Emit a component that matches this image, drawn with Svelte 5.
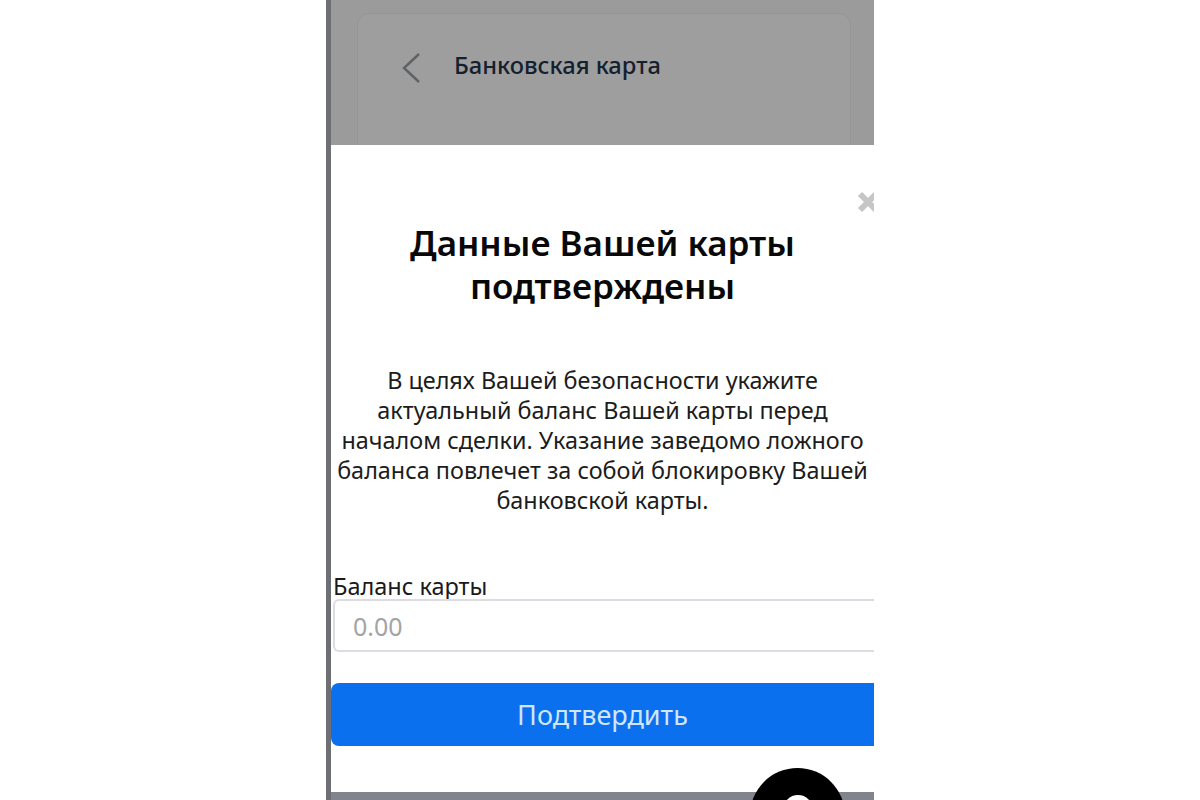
<script>
  let balance = $state('');
</script>

<div class="stage">
  <div class="phone">
    <div class="backdrop">
      <div class="card">
        <svg class="back" width="20" height="32" viewBox="0 0 20 32" fill="none" stroke="#5d6266" stroke-width="2.4">
          <path d="M18 2 L3 16 L18 30" />
        </svg>
        <span class="card-title">Банковская карта</span>
      </div>
    </div>

    <div class="modal">
      <svg class="close" width="22" height="22" viewBox="0 0 22 22" stroke="#c6c6c6" stroke-width="6">
        <path d="M3 3 L19 19 M19 3 L3 19" />
      </svg>
      <h2>Данные Вашей карты<br />подтверждены</h2>
      <p>
        В целях Вашей безопасности укажите<br />
        актуальный баланс Вашей карты перед<br />
        началом сделки. Указание заведомо ложного<br />
        баланса повлечет за собой блокировку Вашей<br />
        банковской карты.
      </p>
      <label for="balance">Баланс карты</label>
      <input id="balance" type="text" placeholder="0.00" bind:value={balance} />
      <button type="button">Подтвердить</button>
    </div>

    <div class="strip"></div>
    <div class="chat"><span class="chat-dot"></span></div>
  </div>
</div>

<style>
  :global(body) {
    background: #fff;
  }

  .stage {
    display: flex;
    justify-content: center;
    height: 800px;
    overflow: hidden;
    font-family: "Noto Sans", "Open Sans", sans-serif;
  }

  .phone {
    position: relative;
    width: 548px;
    height: 800px;
    background: #9b9b9b;
    border-left: 5px solid #6e6f75;
    box-sizing: border-box;
    overflow: hidden;
  }

  .backdrop {
    height: 145px;
    padding: 13px 23px 0 26px;
    box-sizing: border-box;
  }

  .card {
    display: flex;
    align-items: flex-start;
    height: 132px;
    padding: 38px 0 0 43px;
    background: #9e9e9e;
    border: 1px solid #959595;
    border-bottom: none;
    border-radius: 12px 12px 0 0;
    box-sizing: border-box;
  }

  .back {
    flex: none;
    margin-right: 33px;
  }

  .card-title {
    font-size: 23.7px;
    font-weight: 500;
    line-height: 26px;
    color: #15202e;
  }

  .modal {
    position: relative;
    display: flex;
    flex-direction: column;
    height: 647px;
    padding-top: 76px;
    background: #fff;
    box-sizing: border-box;
    color: #111;
  }

  .close {
    position: absolute;
    top: 46px;
    right: -5px;
  }

  h2 {
    margin: 0;
    font-size: 35px;
    font-weight: 600;
    line-height: 43px;
    text-align: center;
    color: #080808;
  }

  p {
    margin: 58px 0 0;
    font-size: 23.4px;
    line-height: 30px;
    text-align: center;
    color: #1c1c1c;
    white-space: nowrap;
  }

  label {
    margin: 58px 0 0 2px;
    font-size: 23.5px;
    line-height: 26px;
    color: #1a1a1a;
  }

  input {
    height: 53px;
    margin: 0 0 0 2px;
    padding: 0 18px;
    border: 2px solid #dcdce2;
    border-right: none;
    border-radius: 6px 0 0 6px;
    box-sizing: border-box;
    font: inherit;
    font-size: 25px;
    color: #222;
    outline: none;
  }

  input::placeholder {
    color: #a4a4a4;
  }

  button {
    height: 63px;
    margin-top: 31px;
    border: none;
    border-radius: 8px 0 0 8px;
    background: #0a70ee;
    font: inherit;
    font-size: 27px;
    color: #cfe6fb;
  }

  .strip {
    height: 8px;
    background: #81848c;
  }

  .chat {
    position: absolute;
    left: 419px;
    top: 768px;
    display: flex;
    justify-content: center;
    width: 95px;
    height: 95px;
    border-radius: 50%;
    background: #000;
  }

  .chat-dot {
    width: 30px;
    height: 30px;
    margin-top: 27px;
    border-radius: 50%;
    background: #fff;
  }
</style>
